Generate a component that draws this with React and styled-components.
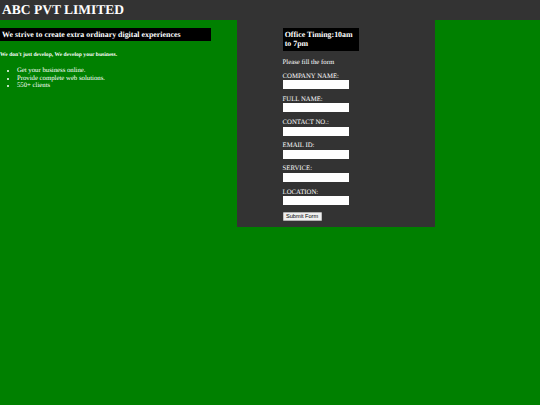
import React from 'react';
import styled, { createGlobalStyle } from 'styled-components';

const GlobalStyle = createGlobalStyle`
  html, body {
    margin: 0;
    background: #008000;
  }
  body {
    color: #fff;
    font-family: "Liberation Serif", "Times New Roman", serif;
    font-size: 6.75px;
    line-height: 7.7px;
    text-rendering: geometricPrecision;
  }
  *, *::before, *::after { box-sizing: border-box; }
`;

const Page = styled.div`
  min-height: 405px;
`;

const Header = styled.header`
  height: 19.8px;
  padding: 2.1px;
  background: #333;
`;

const Title = styled.h1`
  margin: 0;
  font-size: 13.5px;
  line-height: 15.6px;
`;

const Columns = styled.main`
  display: flex;
  align-items: flex-start;
`;

const Intro = styled.section`
  width: 237px;
  padding-top: 8.1px;
`;

const Banner = styled.h3`
  width: ${({ $width }) => $width}px;
  margin: 0;
  padding: 2.1px;
  background: #000;
  font-size: 7.9px;
  line-height: 9.3px;
`;

const Tagline = styled.h5`
  margin: 10.6px 0 0;
  font-size: 5.6px;
  line-height: 6.4px;
`;

const Features = styled.ul`
  margin: 8.8px 0 0;
  padding-left: 16.9px;
  line-height: 7.5px;
`;

const Panel = styled.aside`
  width: 197.6px;
  height: 207.4px;
  padding: 8.1px 0 0 45.6px;
  background: #333;
`;

const Note = styled.p`
  margin: 8px 0 6.2px;
`;

const Field = styled.label`
  display: block;
  height: 23.2px;
`;

const Input = styled.input`
  display: block;
  width: 66.6px;
  height: 8.9px;
  margin: 0;
  padding: 0 1px;
  border: 0;
  background: #fff;
  font: 5.6px "Liberation Sans", Arial, sans-serif;
`;

const Submit = styled.button`
  display: block;
  width: 39px;
  height: 9px;
  margin: 0;
  padding: 0;
  border: 0;
  border-radius: 1px;
  background: #efefef;
  color: #000;
  font: 5.63px/9px "Liberation Sans", Arial, sans-serif;
  box-shadow: inset 0 0 0 0.4px #767676;
`;

const features = ['Get your business online.', 'Provide complete web solutions.', '550+ clients'];
const fields = ['COMPANY NAME:', 'FULL NAME:', 'CONTACT NO.:', 'EMAIL ID:', 'SERVICE:', 'LOCATION:'];

export default function App() {
  return (
    <Page>
      <GlobalStyle />
      <Header>
        <Title>ABC PVT LIMITED</Title>
      </Header>
      <Columns>
        <Intro>
          <Banner $width={210.9}>We strive to create extra ordinary digital experiences</Banner>
          <Tagline>We don't just develop, We develop your business.</Tagline>
          <Features>
            {features.map((text) => <li key={text}>{text}</li>)}
          </Features>
        </Intro>
        <Panel>
          <Banner $width={76}>Office Timing:10am to 7pm</Banner>
          <Note>Please fill the form</Note>
          <form onSubmit={(event) => event.preventDefault()}>
            {fields.map((label) => (
              <Field key={label}>
                {label}
                <Input type="text" />
              </Field>
            ))}
            <Submit type="submit">Submit Form</Submit>
          </form>
        </Panel>
      </Columns>
    </Page>
  );
}
